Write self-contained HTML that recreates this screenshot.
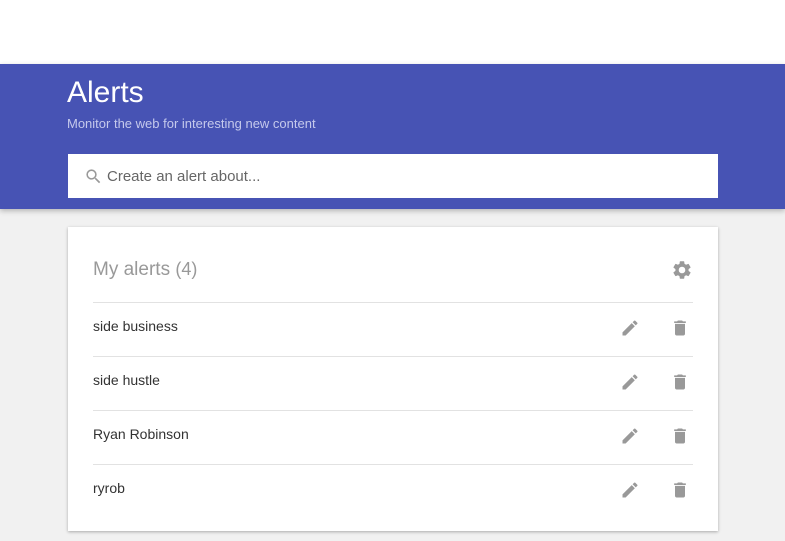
<!DOCTYPE html>
<html><head><style>
body{margin:0;width:785px;height:541px;background:#f1f1f1;font-family:"Liberation Sans",Arial,sans-serif;overflow:hidden;position:relative}
.top{position:absolute;left:0;top:0;width:785px;height:64px;background:#fff}
.hdr{position:absolute;left:0;top:64px;width:785px;height:145px;background:#4753b4;box-shadow:0 2px 5px rgba(0,0,0,.25)}
.h1{position:absolute;left:67px;top:76px;color:#fff;font-size:30px;font-weight:300;letter-spacing:0}
.sub{position:absolute;left:67px;top:116px;color:#c5c9ec;font-size:13px}
.search{position:absolute;left:68px;top:154px;width:650px;height:44px;background:#fff}
.search span{position:absolute;left:39px;top:14px;font-size:15px;color:#666}
.card{position:absolute;left:68px;top:227px;width:650px;height:304px;background:#fff;box-shadow:0 1px 3px rgba(0,0,0,.3)}
.title{position:absolute;left:25px;top:32px;font-size:19px;color:#999;font-weight:300}
.row{position:absolute;left:25px;width:600px;height:54px;border-top:1px solid #e2e2e2}
.row span{position:absolute;left:0;top:15px;font-size:14px;color:#333}
.row svg{position:absolute;top:15px}
</style></head><body>
<div class="top"></div>
<div class="hdr"></div>
<div class="h1">Alerts</div>
<div class="sub">Monitor the web for interesting new content</div>
<div class="search">
<svg style="position:absolute;left:16px;top:13px" width="19" height="19" viewBox="0 0 24 24"><path fill="#999" d="M15.5 14h-.79l-.28-.27A6.47 6.47 0 0016 9.5 6.5 6.5 0 109.5 16c1.61 0 3.09-.59 4.230-1.57l.27.28v.79l5 4.99L20.49 19l-4.99-5zm-6 0C7.01 14 5 11.990 5 9.5S7.01 5 9.5 5 14 7.01 14 9.5 11.99 14 9.5 14z"/></svg>
<span>Create an alert about...</span></div>
<div class="card">
<div class="title">My alerts <span style="font-size:18px">(4)</span></div>
<svg style="position:absolute;left:603px;top:32px" width="22" height="22" viewBox="0 0 24 24"><path fill="#999" d="M19.14 12.94c.04-.3.06-.61.06-.94s-.02-.64-.07-.94l2.03-1.58a.49.49 0 00.12-.61l-1.92-3.32a.49.49 0 00-.59-.22l-2.39.96c-.5-.38-1.03-.7-1.62-.94l-.36-2.54a.48.48 0 00-.48-.41h-3.84c-.24 0-.43.17-.47.41l-.36 2.54c-.59.24-1.13.57-1.62.94l-2.39-.96a.48.48 0 00-.59.22L2.74 8.87a.47.47 0 00.12.61l2.03 1.58c-.05.3-.09.63-.09.94s.02.64.07.94l-2.03 1.58a.49.49 0 00-.12.61l1.92 3.32c.12.22.37.29.59.22l2.39-.96c.5.38 1.03.7 1.62.94l.36 2.54c.05.24.24.41.48.41h3.84c.24 0 .44-.17.47-.41l.36-2.54c.59-.24 1.13-.56 1.62-.94l2.39.96c.22.08.47 0 .59-.22l1.92-3.32a.47.47 0 00-.12-.61l-2.010-1.58zM12 15.6A3.6 3.6 0 1112 8.4a3.6 3.6 0 010 7.2z"/></svg>
<div class="row" style="top:75px"><span>side business</span>
<svg style="left:527px" width="20" height="20" viewBox="0 0 24 24"><path fill="#999" d="M3 17.25V21h3.75L17.81 9.94l-3.75-3.75L3 17.25zM20.71 7.04a1 1 0 000-1.41l-2.34-2.34a1 1 0 00-1.41 0l-1.83 1.83 3.75 3.75 1.830-1.83z"/></svg>
<svg style="left:577px" width="20" height="20" viewBox="0 0 24 24"><path fill="#999" d="M6 19c0 1.1.9 2 2 2h8c1.1 0 2-.9 2-2V7H6v12zM19 4h-3.5l-1-1h-5l-1 1H5v2h14V4z"/></svg></div>
<div class="row" style="top:129px"><span>side hustle</span>
<svg style="left:527px" width="20" height="20" viewBox="0 0 24 24"><path fill="#999" d="M3 17.25V21h3.75L17.81 9.94l-3.75-3.75L3 17.25zM20.71 7.04a1 1 0 000-1.41l-2.34-2.34a1 1 0 00-1.41 0l-1.83 1.83 3.75 3.75 1.830-1.83z"/></svg>
<svg style="left:577px" width="20" height="20" viewBox="0 0 24 24"><path fill="#999" d="M6 19c0 1.1.9 2 2 2h8c1.1 0 2-.9 2-2V7H6v12zM19 4h-3.5l-1-1h-5l-1 1H5v2h14V4z"/></svg></div>
<div class="row" style="top:183px"><span>Ryan Robinson</span>
<svg style="left:527px" width="20" height="20" viewBox="0 0 24 24"><path fill="#999" d="M3 17.25V21h3.75L17.81 9.94l-3.75-3.75L3 17.25zM20.71 7.04a1 1 0 000-1.41l-2.34-2.34a1 1 0 00-1.41 0l-1.83 1.83 3.75 3.75 1.830-1.83z"/></svg>
<svg style="left:577px" width="20" height="20" viewBox="0 0 24 24"><path fill="#999" d="M6 19c0 1.1.9 2 2 2h8c1.1 0 2-.9 2-2V7H6v12zM19 4h-3.5l-1-1h-5l-1 1H5v2h14V4z"/></svg></div>
<div class="row" style="top:237px"><span>ryrob</span>
<svg style="left:527px" width="20" height="20" viewBox="0 0 24 24"><path fill="#999" d="M3 17.25V21h3.75L17.81 9.94l-3.75-3.75L3 17.25zM20.71 7.04a1 1 0 000-1.41l-2.34-2.34a1 1 0 00-1.41 0l-1.83 1.83 3.75 3.75 1.830-1.83z"/></svg>
<svg style="left:577px" width="20" height="20" viewBox="0 0 24 24"><path fill="#999" d="M6 19c0 1.1.9 2 2 2h8c1.1 0 2-.9 2-2V7H6v12zM19 4h-3.5l-1-1h-5l-1 1H5v2h14V4z"/></svg></div>
</div>
</body></html>
